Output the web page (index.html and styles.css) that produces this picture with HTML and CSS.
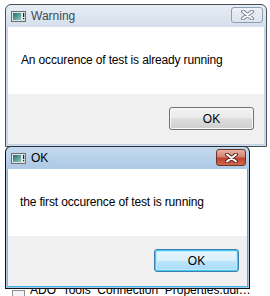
FILE: index.html
```html
<!DOCTYPE html>
<html>
<head>
<meta charset="utf-8">
<link rel="stylesheet" href="styles.css">
</head>
<body>
<div class="list">
  <div class="row"><span class="cb"></span><span class="name">ADO_Tools_Connection_Properties.udl1.txt.backup</span></div>
  <div class="row"><span class="cb"></span><span class="name">ADO_Tools_Connection_Properties.udl2.txt.backup</span></div>
  <div class="row"><span class="cb"></span><span class="name">ADO_Tools_Connection_Properties.udl3.txt.backup</span></div>
  <div class="row"><span class="cb"></span><span class="name">ADO_Tools_Connection_Properties.udl4.txt.backup</span></div>
</div>

<div class="win win-inactive">
  <div class="titlebar">
    <svg class="appicon" width="15" height="11" viewBox="0 0 15 11">
      <defs><linearGradient id="g1" x1="0" y1="0" x2="1" y2="1"><stop offset="0" stop-color="#1f6f78"/><stop offset="1" stop-color="#8ccab8"/></linearGradient></defs>
      <rect x="0.5" y="0.5" width="14" height="10" fill="#e4e4e4" stroke="#6f6f6f"/>
      <rect x="2" y="2" width="8" height="7" fill="url(#g1)"/>
      <rect x="12" y="2" width="1.2" height="4" fill="#222"/>
      <rect x="12" y="7" width="1.2" height="1.2" fill="#222"/>
    </svg>
    <span class="title">Warning</span>
    <span class="close close-inactive">
      <svg width="13" height="10" viewBox="0 0 13 10"><path d="M2 1.5 L11 8.5 M11 1.5 L2 8.5" stroke="#7b8797" stroke-width="4" stroke-linecap="round"/><path d="M2 1.5 L11 8.5 M11 1.5 L2 8.5" stroke="#fff" stroke-width="2" stroke-linecap="round"/></svg>
    </span>
  </div>
  <div class="client">
    <div class="msg">An occurence of test is already running</div>
    <div class="footer"><button class="btn">OK</button></div>
  </div>
</div>

<div class="win win-active">
  <div class="titlebar">
    <svg class="appicon" width="15" height="11" viewBox="0 0 15 11">
      <defs><linearGradient id="g2" x1="0" y1="0" x2="1" y2="1"><stop offset="0" stop-color="#1f6f78"/><stop offset="1" stop-color="#8ccab8"/></linearGradient></defs>
      <rect x="0.5" y="0.5" width="14" height="10" fill="#e4e4e4" stroke="#6f6f6f"/>
      <rect x="2" y="2" width="8" height="7" fill="url(#g2)"/>
      <rect x="12" y="2" width="1.2" height="4" fill="#222"/>
      <rect x="12" y="7" width="1.2" height="1.2" fill="#222"/>
    </svg>
    <span class="title">OK</span>
    <span class="close close-active">
      <svg width="13" height="10" viewBox="0 0 13 10"><path d="M2 1.5 L11 8.5 M11 1.5 L2 8.5" stroke="#5a2a22" stroke-width="4" stroke-linecap="round"/><path d="M2 1.5 L11 8.5 M11 1.5 L2 8.5" stroke="#fff" stroke-width="2" stroke-linecap="round"/></svg>
    </span>
  </div>
  <div class="client">
    <div class="msg">the first occurence of test is running</div>
    <div class="footer"><button class="btn btn-default">OK</button></div>
  </div>
</div>
</body>
</html>
```

FILE: styles.css
```css
html, body {
  margin: 0;
  padding: 0;
}
body {
  width: 270px;
  height: 296px;
  overflow: hidden;
  position: relative;
  background: #fff;
  font-family: "Liberation Sans", Arial, sans-serif;
  font-size: 12px;
  color: #000;
}

/* underlying list */
.list {
  padding-top: 213px;
  display: flex;
  flex-direction: column;
}
.row {
  height: 22px;
  display: flex;
  align-items: flex-start;
  padding-left: 12px;
}
.cb {
  flex: none;
  width: 11px;
  height: 11px;
  border: 1px solid #8e8f8f;
  background: #f4f4f4;
  margin-top: 11px;
}
.name {
  margin-left: 5px;
  line-height: 22px;
  width: 227px;
  white-space: nowrap;
  overflow: hidden;
  text-overflow: ellipsis;
}

/* windows */
.win {
  position: absolute;
  left: 5px;
  box-sizing: border-box;
  display: flex;
  flex-direction: column;
  border-radius: 6px 6px 0 0;
  padding: 0 1px 1px 1px;
}
.win-inactive {
  top: 4px;
  width: 262px;
  height: 143px;
  border: 1px solid #4a4d52;
  background: linear-gradient(#e6edf5, #d3deea 24px, #d0dcea);
}
.win-active {
  top: 146px;
  width: 245px;
  height: 143px;
  border: 1px solid #111;
  border-top-color: #2b2f36;
  background: linear-gradient(#c3d9ee, #abc7e5 24px, #aac6e4);
}

.titlebar {
  height: 22px;
  flex: none;
  display: flex;
  align-items: center;
  padding-left: 4px;
}
.appicon {
  flex: none;
  margin-top: 1px;
}
.title {
  margin-left: 5px;
  font-size: 12px;
}
.win-inactive .title { color: #3f4a58; }
.win-active .title { color: #000; }

.close {
  margin-left: auto;
  align-self: flex-start;
  margin-top: 2px;
  margin-right: 2px;
  height: 16px;
  box-sizing: border-box;
  border-radius: 3px;
  display: flex;
  align-items: center;
  justify-content: center;
}
.close-inactive {
  width: 32px;
  border: 1px solid #8f9db2;
  background: linear-gradient(#eef2f7, #dbe3ec);
}
.close-active {
  width: 30px;
  height: 17px;
  margin-top: 2px;
  border: 1px solid #6e3327;
  background: linear-gradient(#e9b3a5, #d48470 45%, #c0412c 55%, #d06a50);
}

.client {
  flex: 1;
  display: flex;
  flex-direction: column;
}
.win-inactive .client { border: 1px solid #c3d3e5; border-top: none; }
.win-active .client { border: 1px solid #39b7e6; border-top: none; border-left-color: #8fb0d4; }

.msg {
  background: #fff;
  height: 67px;
  box-sizing: border-box;
  padding: 26px 0 0 13px;
  line-height: 15px;
  letter-spacing: -0.15px;
}
.win-active .msg { padding-left: 12px; }
.footer {
  flex: 1;
  background: #f0f0f0;
  display: flex;
  justify-content: flex-end;
  align-items: flex-start;
  padding-top: 13px;
}
.win-inactive .footer { padding-right: 10px; }
.win-active .footer { padding-right: 8px; }

.btn {
  width: 85px;
  height: 23px;
  box-sizing: border-box;
  border: 1px solid #707070;
  border-radius: 3px;
  background: linear-gradient(#f2f2f2, #ebebeb 50%, #dddddd 50%, #cfcfcf);
  box-shadow: inset 0 0 0 1px #f8f8f8;
  font-family: "Liberation Sans", Arial, sans-serif;
  font-size: 12px;
  color: #000;
  padding: 0;
}
.btn-default {
  border-color: #3c7fb1;
  background: linear-gradient(#eaf6fd, #d9f0fc 50%, #bee6fd 50%, #a7d9f5);
  box-shadow: inset 0 0 0 1px #48c8f0, inset 0 0 0 2px #b8ecfc;
}
```
